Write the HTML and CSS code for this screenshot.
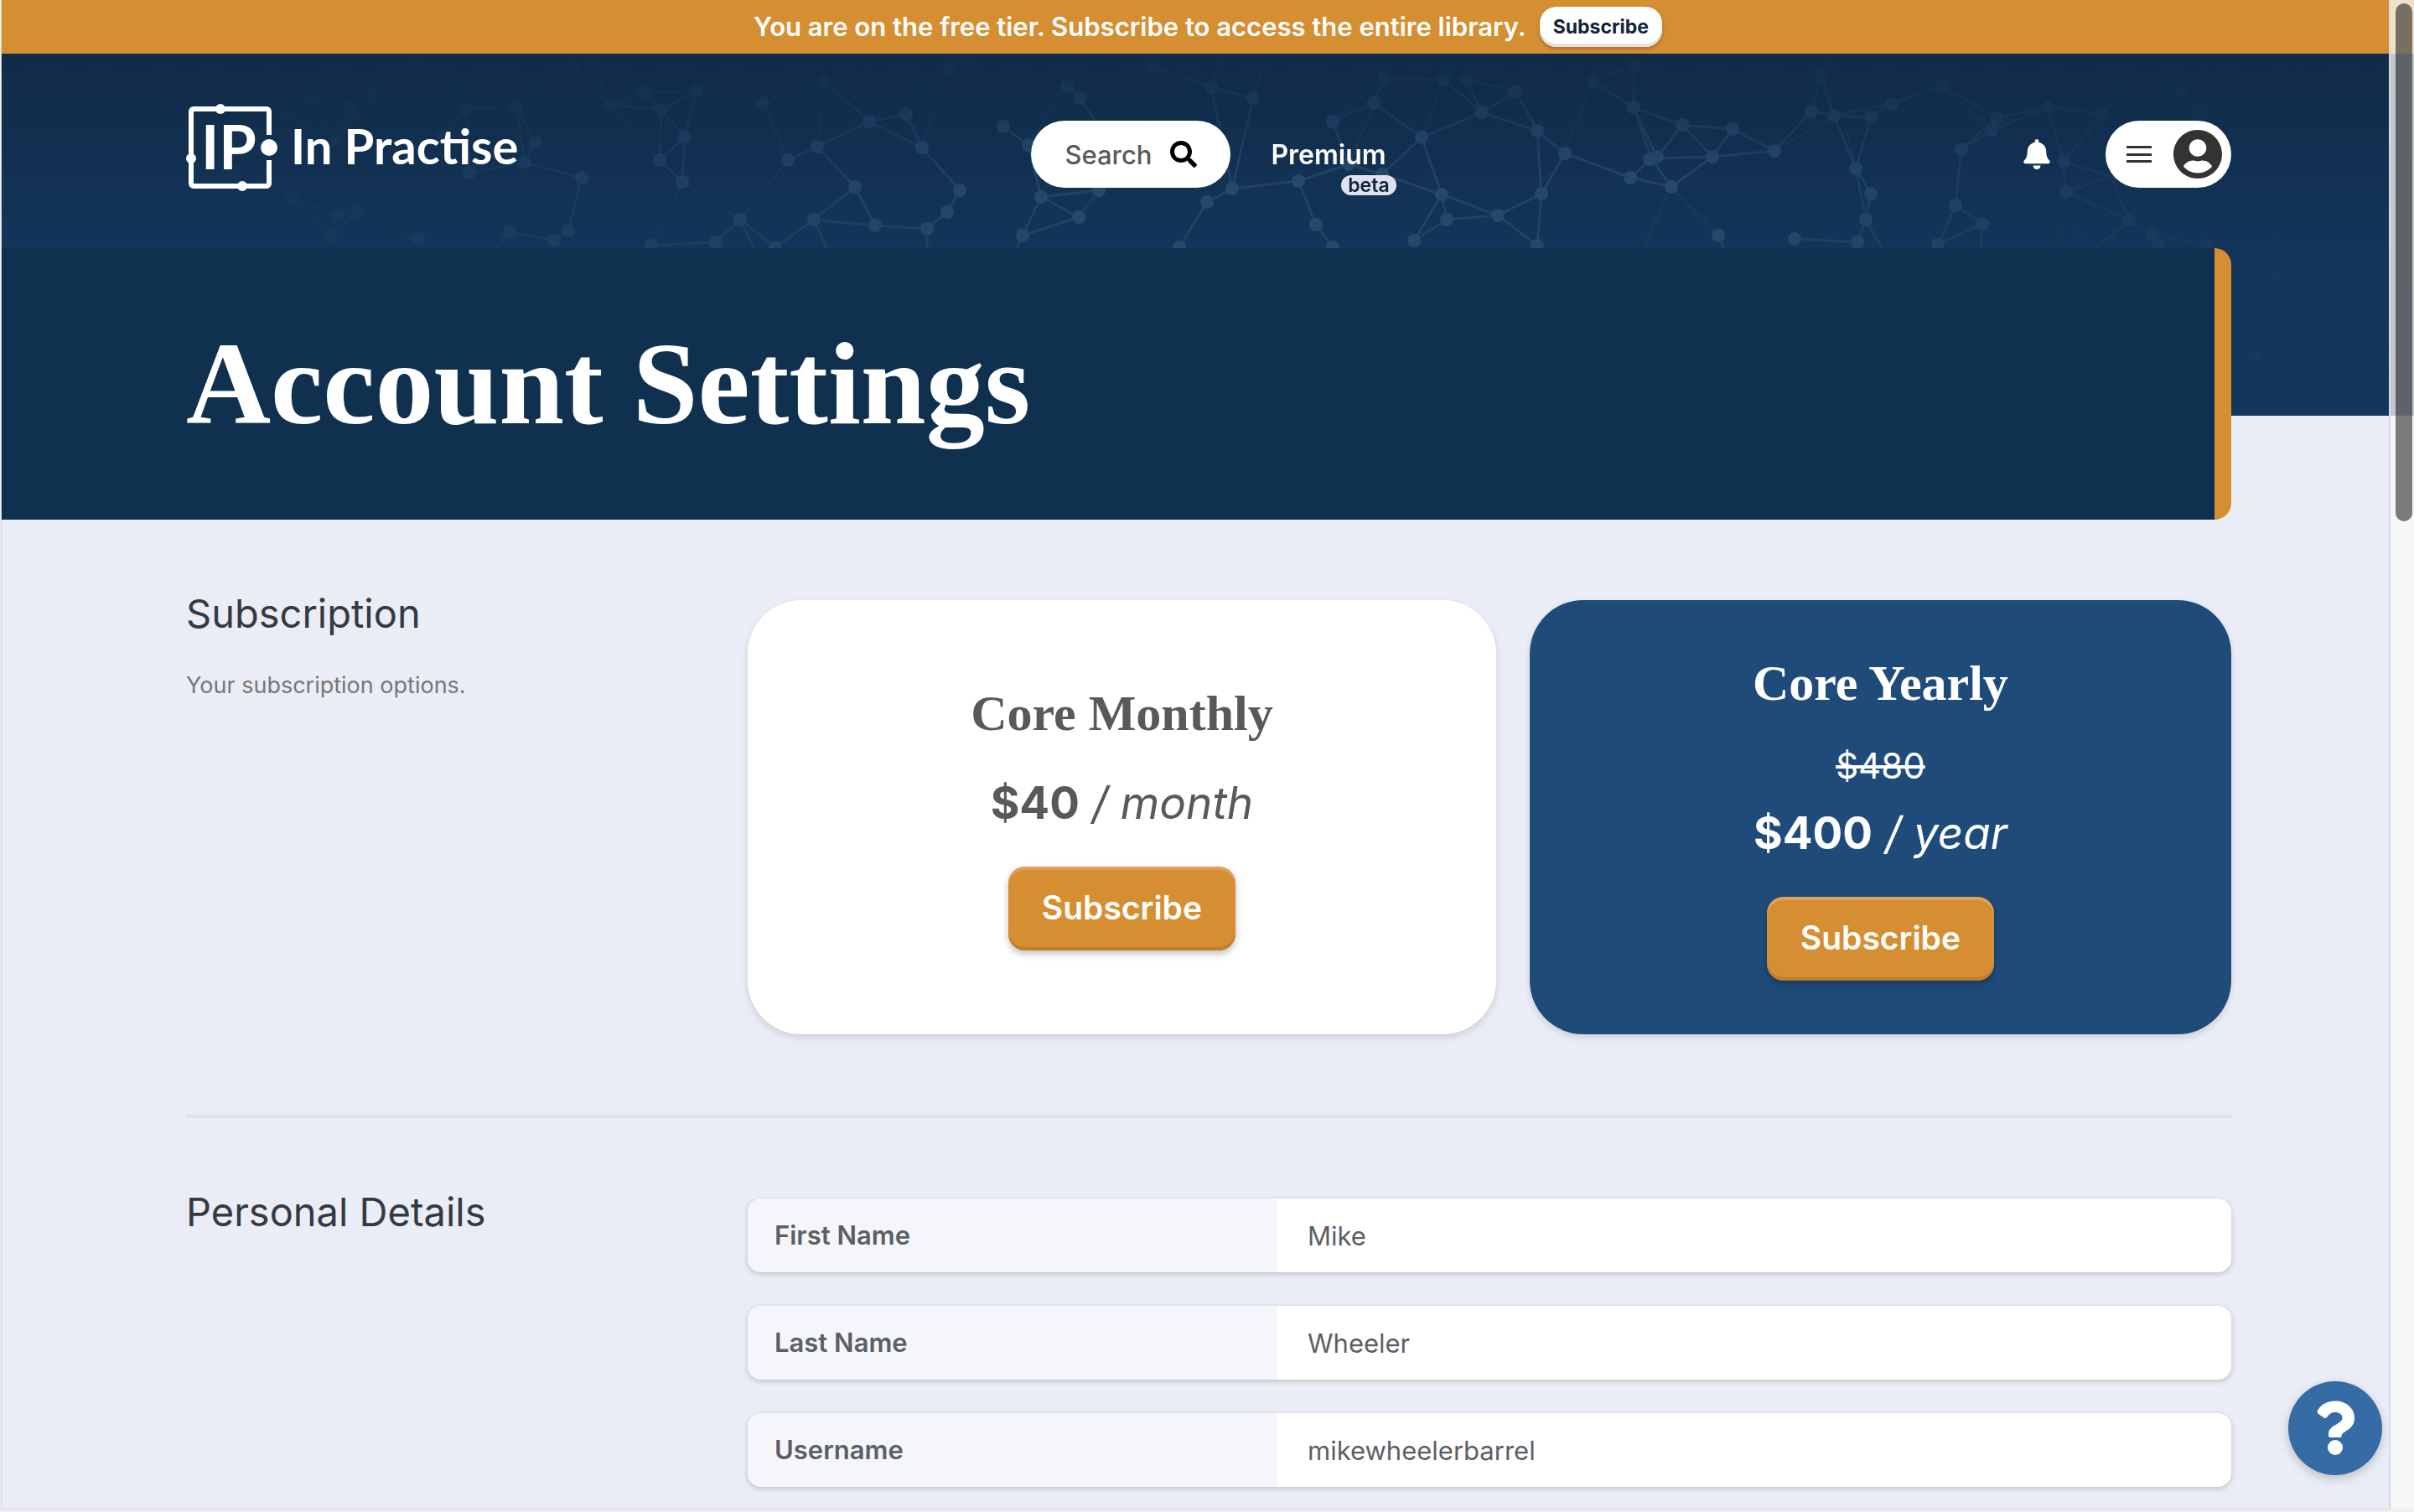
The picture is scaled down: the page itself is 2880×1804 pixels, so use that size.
FILE: index.html
```html
<!DOCTYPE html>
<html lang="en">
<head>
<meta charset="utf-8">
<meta name="viewport" content="width=device-width, initial-scale=1">
<title>Account Settings – In Practise</title>
<link rel="stylesheet" href="styles.css">
</head>
<body>
<div class="page">
  <aside class="banner">
    <p class="banner-text">You are on the free tier. Subscribe to access the entire library.</p>
    <button class="banner-button" type="button">Subscribe</button>
  </aside>

  <header class="masthead">
    <svg class="network" viewBox="0 64 2880 432" preserveAspectRatio="xMidYMin slice" aria-hidden="true">
      <defs>
        <linearGradient id="fade-x" x1="0" x2="1" y1="0" y2="0">
          <stop offset="0" stop-color="#000"/>
          <stop offset=".08" stop-color="#111"/>
          <stop offset=".22" stop-color="#777"/>
          <stop offset=".42" stop-color="#fff"/>
          <stop offset=".72" stop-color="#fff"/>
          <stop offset=".86" stop-color="#777"/>
          <stop offset=".93" stop-color="#222"/>
          <stop offset="1" stop-color="#000"/>
        </linearGradient>
        <linearGradient id="fade-y" x1="0" x2="0" y1="0" y2="1">
          <stop offset="0" stop-color="#112c48" stop-opacity="1"/>
          <stop offset=".6" stop-color="#112f50" stop-opacity="0"/>
        </linearGradient>
        <mask id="network-mask" maskUnits="userSpaceOnUse" x="0" y="64" width="2880" height="432">
          <rect x="0" y="64" width="2880" height="432" fill="url(#fade-x)"/>
        </mask>
        <g id="node"><circle r="8"/></g>
      </defs>
      <g mask="url(#network-mask)" fill="#25496b" stroke="none">
        <path fill="none" stroke="#204263" stroke-width="3" d="M341 137L370 117L415 128L442 115L400 168L415 128M370 117L400 168M341 137L400 168M555 130L615 127L637 169L625 194L559 206L555 130L521 85L495 72M555 130L575 64M615 127L625 194L693 212L677 275L660 287L607 277L590 296M347 236L402 257L426 252L393 282L402 257M347 236L393 282L400 296M727 125L767 111L830 108L788 131L767 111L705 76L727 125L788 131L816 163L786 191L788 131M830 108L816 163L813 217L786 191M683 81L727 125M776 293L852 289L882 262L924 295L970 262L1043 269L1105 273L1129 253L1144 227L1099 176L1080 136L1036 145L974 175L939 191L909 123M852 289L862 296M882 262L898 296M983 97L1036 145L1099 176M974 175L1019 223L970 262L985 296M1019 223L1043 269M1105 273V296M1196 151L1226 173L1241 235L1310 227L1286 259L1241 235L1219 281L1212 296M1219 281L1286 259M1272 103L1288 117L1310 152M1444 104L1494 117L1469 225L1439 241L1406 295M1444 104L1469 225M1373 81L1444 104L1460 64M1494 117L1510 64M1548 216L1608 196L1589 145L1638 123L1695 164L1648 208L1608 196M1548 216L1569 268L1589 295M1638 123L1651 93L1721 95L1767 134L1748 95L1807 109L1767 134L1833 156L1866 183L1838 231L1786 257L1725 262L1719 232L1648 208M1767 134L1695 164L1719 232L1786 257L1833 293L1838 231L1833 156L1807 109M1725 262L1686 287L1719 232M1469 225L1548 216M1899 97L1948 79L1948 128L1899 97M1948 128L2006 149L2066 154L2042 187L1969 189L1944 212L1993 223L2042 187L2116 180L2066 154M2006 149L1976 188L1948 128L1969 189L1993 223M2006 149L2042 187M1866 183L1944 212M2116 180L2160 133L2187 138L2231 140L2256 124L2317 103L2381 141L2376 155L2339 178L2332 245L2364 267L2311 292L2332 245M2160 133L2172 91L2187 138L2213 201L2231 140M2187 138L2256 124M2172 91L2180 64M2213 201L2231 231L2225 262L2215 289M2213 201L2225 262L2244 296M2140 285L2215 289M2049 281L2056 296M2364 267L2362 296M2339 178L2381 141L2442 128L2507 136L2461 193L2442 128L2376 155L2317 103M2461 193L2464 229L2517 210L2461 193M2517 210L2539 263L2567 279L2633 293L2713 292L2739 294L2713 333L2662 350M2464 229L2539 263L2500 296M2507 136L2540 87L2603 110L2624 134"/>
        <path fill="none" stroke="#1a3b5c" stroke-width="2" d="M442 115L485 64M370 117L390 64M415 128L410 64M521 85L555 130L528 162M269 93L282 126L341 137M269 93L195 105L134 103L141 137M280 204L347 236M426 252L498 285M559 206L607 277M625 194L607 277M615 127L690 80M830 108L909 123L983 97L960 64M909 123L939 191M813 217L882 262L939 191M813 217L776 293M786 191L727 125M983 97L974 175M1036 145L1132 81M1099 176L1132 81M1226 173L1272 103L1250 64M1286 259L1310 227L1320 180M1638 123L1589 145L1651 93M1695 164L1721 95M1608 196L1638 123M1748 95L1750 64M1721 95L1735 64M1899 97L1866 183M1992 223L2049 281M1992 223L1960 296M2116 180L2187 138M2213 201L2200 150M2317 103L2340 64M2317 103L2376 155M2464 229L2450 296M2464 229L2485 296M2539 263L2560 220M2567 279L2560 220M2633 293L2625 210M2624 134L2630 80"/>
        <g>
          <use href="#node" x="134" y="103"/><use href="#node" x="195" y="105"/><use href="#node" x="269" y="93"/><use href="#node" x="141" y="137"/><use href="#node" x="282" y="126"/><use href="#node" x="279" y="204"/><use href="#node" x="280" y="294"/><use href="#node" x="341" y="137"/><use href="#node" x="370" y="117"/><use href="#node" x="415" y="128"/><use href="#node" x="442" y="115"/><use href="#node" x="400" y="168"/><use href="#node" x="521" y="85"/><use href="#node" x="495" y="72"/><use href="#node" x="555" y="130"/><use href="#node" x="615" y="127"/><use href="#node" x="637" y="169"/><use href="#node" x="625" y="194"/><use href="#node" x="559" y="206"/><use href="#node" x="528" y="162"/><use href="#node" x="693" y="212"/><use href="#node" x="677" y="275"/><use href="#node" x="660" y="287"/><use href="#node" x="607" y="277"/><use href="#node" x="347" y="236"/><use href="#node" x="402" y="257"/><use href="#node" x="426" y="252"/><use href="#node" x="393" y="282"/><use href="#node" x="498" y="285"/>
          <use href="#node" x="683" y="81"/><use href="#node" x="705" y="76"/><use href="#node" x="727" y="125"/><use href="#node" x="767" y="111"/><use href="#node" x="830" y="108"/><use href="#node" x="788" y="131"/><use href="#node" x="816" y="163"/><use href="#node" x="786" y="191"/><use href="#node" x="813" y="217"/><use href="#node" x="909" y="123"/><use href="#node" x="939" y="191"/><use href="#node" x="882" y="262"/><use href="#node" x="776" y="293"/><use href="#node" x="852" y="289"/><use href="#node" x="924" y="296"/>
          <use href="#node" x="983" y="97"/><use href="#node" x="1036" y="145"/><use href="#node" x="1080" y="136"/><use href="#node" x="974" y="175"/><use href="#node" x="1099" y="176"/><use href="#node" x="1019" y="223"/><use href="#node" x="1144" y="227"/><use href="#node" x="1129" y="253"/><use href="#node" x="970" y="262"/><use href="#node" x="1043" y="269"/><use href="#node" x="1105" y="273"/><use href="#node" x="1132" y="81"/><use href="#node" x="1149" y="76"/><use href="#node" x="1196" y="151"/><use href="#node" x="1226" y="173"/><use href="#node" x="1272" y="103"/><use href="#node" x="1288" y="117"/><use href="#node" x="1241" y="235"/><use href="#node" x="1310" y="227"/><use href="#node" x="1286" y="259"/><use href="#node" x="1219" y="281"/><use href="#node" x="1373" y="81"/><use href="#node" x="1444" y="104"/><use href="#node" x="1494" y="117"/><use href="#node" x="1469" y="225"/><use href="#node" x="1439" y="241"/><use href="#node" x="1406" y="295"/>
          <use href="#node" x="1548" y="216"/><use href="#node" x="1608" y="196"/><use href="#node" x="1589" y="145"/><use href="#node" x="1638" y="123"/><use href="#node" x="1651" y="93"/><use href="#node" x="1721" y="95"/><use href="#node" x="1748" y="95"/><use href="#node" x="1807" y="109"/><use href="#node" x="1767" y="134"/><use href="#node" x="1695" y="164"/><use href="#node" x="1833" y="156"/><use href="#node" x="1866" y="183"/><use href="#node" x="1719" y="232"/><use href="#node" x="1838" y="231"/><use href="#node" x="1786" y="257"/><use href="#node" x="1725" y="262"/><use href="#node" x="1686" y="287"/><use href="#node" x="1833" y="293"/><use href="#node" x="1569" y="268"/><use href="#node" x="1589" y="295"/><use href="#node" x="1648" y="208"/><use href="#node" x="1899" y="97"/><use href="#node" x="1948" y="79"/><use href="#node" x="1948" y="128"/><use href="#node" x="1944" y="212"/><use href="#node" x="1967" y="190"/><use href="#node" x="1976" y="187"/><use href="#node" x="1993" y="223"/>
          <use href="#node" x="2006" y="149"/><use href="#node" x="2066" y="154"/><use href="#node" x="2042" y="187"/><use href="#node" x="2116" y="180"/><use href="#node" x="2160" y="133"/><use href="#node" x="2187" y="138"/><use href="#node" x="2231" y="140"/><use href="#node" x="2256" y="124"/><use href="#node" x="2172" y="91"/><use href="#node" x="2213" y="201"/><use href="#node" x="2231" y="231"/><use href="#node" x="2225" y="262"/><use href="#node" x="2215" y="289"/><use href="#node" x="2140" y="285"/><use href="#node" x="2049" y="281"/><use href="#node" x="2317" y="103"/><use href="#node" x="2381" y="141"/><use href="#node" x="2376" y="155"/><use href="#node" x="2339" y="178"/><use href="#node" x="2332" y="245"/><use href="#node" x="2364" y="267"/><use href="#node" x="2311" y="292"/><use href="#node" x="2442" y="128"/><use href="#node" x="2507" y="136"/><use href="#node" x="2461" y="193"/><use href="#node" x="2464" y="229"/><use href="#node" x="2539" y="263"/><use href="#node" x="2567" y="279"/><use href="#node" x="2574" y="293"/><use href="#node" x="2633" y="293"/><use href="#node" x="2624" y="134"/><use href="#node" x="2603" y="110"/><use href="#node" x="2540" y="87"/><use href="#node" x="2713" y="292"/><use href="#node" x="2739" y="294"/><use href="#node" x="2713" y="333"/><use href="#node" x="2689" y="423"/><use href="#node" x="2730" y="124"/>
        </g>
      </g>
      <rect x="0" y="64" width="2880" height="232" fill="url(#fade-y)"/>
    </svg>

    <nav class="nav" aria-label="Main">
      <a class="logo" href="#" aria-label="In Practise">
        <svg width="404" height="124" viewBox="0 0 404 124" aria-hidden="true">
          <g fill="none" stroke="#fff" stroke-width="6">
            <path d="M99 39V11a3 3 0 0 0-3-3H9a3 3 0 0 0-3 3v86a3 3 0 0 0 3 3h87a3 3 0 0 0 3-3V69"/>
          </g>
          <g fill="#fff">
            <circle cx="41" cy="8" r="6"/>
            <circle cx="6" cy="67" r="6"/>
            <circle cx="67" cy="100" r="6"/>
            <circle cx="99" cy="54" r="10"/>
          </g>
          <text class="logo-mark" x="18" y="80">IP</text>
          <text class="logo-name" x="125" y="74">In Practise</text>
        </svg>
      </a>
      <div class="nav-center">
        <button class="search" type="button">
          Search
          <svg width="32" height="32" viewBox="0 0 512 512" aria-hidden="true"><path d="M505 442.700L405.300 343c-4.500-4.500-10.600-7-17-7H372c27.600-35.300 44-79.700 44-128C416 93.100 322.900 0 208 0S0 93.100 0 208s93.100 208 208 208c48.300 0 92.700-16.400 128-44v16.300c0 6.400 2.500 12.500 7 17l99.700 99.700c9.400 9.400 24.600 9.400 33.900 0l28.300-28.300c9.400-9.400 9.400-24.600.1-34zM208 336c-70.700 0-128-57.200-128-128 0-70.700 57.200-128 128-128 70.700 0 128 57.200 128 128 0 70.700-57.200 128-128 128z"/></svg>
        </button>
        <a class="premium" href="#">Premium<span class="beta">beta</span></a>
      </div>
      <div class="nav-end">
        <button class="bell" type="button" aria-label="Notifications">
          <svg width="32" height="36" viewBox="0 0 448 512" fill="#fff" aria-hidden="true"><path d="M224 512c35.320 0 63.970-28.650 63.970-64H160.030c0 35.350 28.650 64 63.970 64zm215.390-149.710c-19.320-20.760-55.470-51.990-55.470-154.290 0-77.700-54.480-139.900-127.940-155.160V32c0-17.670-14.320-32-31.980-32s-31.980 14.330-31.980 32v20.840C118.560 68.100 64.080 130.300 64.080 208c0 102.300-36.150 133.530-55.470 154.290-6 6.450-8.660 14.160-8.610 21.710.11 16.400 12.980 32 32.100 32h383.800c19.120 0 32-15.600 32.100-32 .05-7.550-2.610-15.270-8.610-21.710z"/></svg>
        </button>
        <button class="account" type="button" aria-label="Account menu">
          <svg width="32" height="24" viewBox="0 0 32 24" fill="#333" aria-hidden="true"><path d="M1 2h30v3H1zM1 11h30v3H1zM1 19h30v3H1z"/></svg>
          <svg width="58" height="58" viewBox="0 0 496 496" fill="#333" aria-hidden="true"><path d="M248 0C111 0 0 111 0 248s111 248 248 248 248-111 248-248S385 0 248 0zm0 96c48.600 0 88 39.400 88 88s-39.400 88-88 88-88-39.400-88-88 39.400-88 88-88zm0 344c-58.700 0-111.300-26.600-146.500-68.200 18.800-35.400 55.600-59.800 98.500-59.800 2.400 0 4.800.4 7.100 1.100 13 4.200 26.600 6.900 40.900 6.900 14.300 0 28-2.700 40.900-6.900 2.300-.7 4.700-1.100 7.100-1.100 42.900 0 79.700 24.400 98.500 59.800C359.300 413.400 306.700 440 248 440z"/></svg>
        </button>
      </div>
    </nav>

    <div class="title-bar">
      <h1 class="title">Account Settings</h1>
    </div>
  </header>

  <main class="content">
    <section class="section">
      <div class="section-intro">
        <h2 class="section-title">Subscription</h2>
        <p class="section-text">Your subscription options.</p>
      </div>
      <div class="plans">
        <article class="plan">
          <h3 class="plan-name">Core Monthly</h3>
          <p class="price"><strong>$40</strong> <em>/ month</em></p>
          <button class="subscribe" type="button">Subscribe</button>
        </article>
        <article class="plan plan-featured">
          <h3 class="plan-name">Core Yearly</h3>
          <p class="old-price"><s>$480</s></p>
          <p class="price"><strong>$400</strong> <em>/ year</em></p>
          <button class="subscribe" type="button">Subscribe</button>
        </article>
      </div>
    </section>

    <hr class="divider">

    <section class="section">
      <div class="section-intro">
        <h2 class="section-title">Personal Details</h2>
      </div>
      <form class="fields">
        <div class="field">
          <label class="field-label" for="first-name">First Name</label>
          <input class="field-input" id="first-name" type="text" value="Mike">
        </div>
        <div class="field">
          <label class="field-label" for="last-name">Last Name</label>
          <input class="field-input" id="last-name" type="text" value="Wheeler">
        </div>
        <div class="field">
          <label class="field-label" for="username">Username</label>
          <input class="field-input" id="username" type="text" value="mikewheelerbarrel">
        </div>
      </form>
    </section>
  </main>
</div>

<button class="help" type="button" aria-label="Help">
  <svg width="46" height="66" viewBox="0 0 46 66" fill="#fff" aria-hidden="true"><path d="M2.500 11C7 4 14 .5 23.500 .5 35 .5 46 8.500 46 20.500c0 15.500-15.500 15.500-15.500 22 0 1-.8 1.500-1.800 1.500H17c-1.200 0-2-.8-2-2v-2C15 29 31.500 28.500 31.500 20.500c0-4-4-6.500-9-6.500-4.500 0-6.500 2.500-9.500 6-1 1.200-2.500 1.300-3.700.4L3 16c-1.500-1.200-1.700-3.200-.5-5z"/><circle cx="23" cy="56" r="9"/></svg>
</button>

<div class="scroll-track" aria-hidden="true"><div class="scroll-thumb"></div></div>
</body>
</html>
```
FILE: styles.css
```css
*, *::before, *::after { box-sizing: border-box; }

body {
  margin: 0;
  min-height: 100vh;
  padding: 0 0 3px 1px;
  display: flex;
  flex-direction: column;
  background: #f0f0f1;
  color: #595959;
  font-family: Inter, "Liberation Sans", sans-serif;
}

h1, h2, h3, p { margin: 0; font-weight: 400; }

button {
  border: 0;
  padding: 0;
  font-family: inherit;
  cursor: pointer;
}

svg { display: block; }

.page {
  flex: 1;
  background: #eaedf5;
  border-left: 1px solid #d4d5da;
  border-bottom: 1px solid #d4d5da;
}

/* Free tier banner */
.banner {
  display: flex;
  align-items: center;
  justify-content: center;
  gap: 16px;
  height: 64px;
  background: #d58f32;
}

.banner-text {
  color: #fff;
  font-size: 31px;
  font-weight: 600;
  line-height: 40px;
}

.banner-button {
  height: 48px;
  padding: 0 16px;
  border-radius: 20px;
  background: #fff;
  box-shadow: inset 0 -4px 0 #e3e3e3, 0 2px 4px rgba(0, 0, 0, .25);
  color: #11253a;
  font-size: 23px;
  font-weight: 700;
}

/* Masthead */
.masthead {
  position: relative;
  background: linear-gradient(#112c48, #13355a 56%, #13365e) no-repeat 0 0 / 100% 432px;
}

.network {
  position: absolute;
  top: 0;
  left: 0;
  width: 100%;
  height: 432px;
}

.nav {
  position: relative;
  display: grid;
  grid-template-columns: 1fr auto 1fr;
  align-items: center;
  height: 232px;
  padding: 8px 218px 0 220px;
}

.logo { justify-self: start; }

.logo-mark {
  fill: #fff;
  font-family: Lato, sans-serif;
  font-size: 72px;
  font-weight: 700;
}

.logo-name {
  fill: #fff;
  font-family: Lato, sans-serif;
  font-size: 58px;
  font-weight: 700;
}

.nav-center {
  display: flex;
  align-items: center;
  gap: 48px;
}

.search {
  display: flex;
  align-items: center;
  gap: 22px;
  height: 80px;
  padding: 0 40px;
  border-radius: 40px;
  background: #fff;
  color: #595959;
  font-size: 31px;
  font-weight: 500;
}

.premium {
  position: relative;
  color: #fff;
  font-size: 32px;
  font-weight: 600;
  text-decoration: none;
}

.beta {
  position: absolute;
  top: 44px;
  right: -12px;
  padding: 0 8px;
  border-radius: 12px;
  background: #dfe2ee;
  color: #11253a;
  font-size: 23px;
  line-height: 24px;
}

.nav-end {
  display: flex;
  align-items: center;
  justify-content: flex-end;
  gap: 66px;
}

.bell { background: none; }

.account {
  display: flex;
  align-items: center;
  gap: 25px;
  height: 80px;
  padding: 0 11px 0 24px;
  border-radius: 40px;
  background: #fff;
}

.title-bar {
  position: relative;
  display: flex;
  align-items: center;
  height: 324px;
  margin-right: 218px;
  padding-left: 220px;
  border-right: 20px solid #d58f32;
  border-radius: 0 20px 20px 0;
  background: #10304f;
}

.title {
  color: #fff;
  font-family: "Liberation Serif", serif;
  font-size: 140px;
  font-weight: 700;
  line-height: 160px;
}

/* Sections */
.content { padding: 0 218px 26px 220px; }

.section {
  display: grid;
  grid-template-columns: 670px 1fr;
  padding-top: 96px;
}

.section-title {
  color: #343a44;
  font-size: 47px;
  line-height: 32px;
}

.section-text {
  margin-top: 50px;
  color: #777;
  font-size: 27px;
  line-height: 40px;
}

.divider {
  height: 4px;
  margin: 96px 0 0;
  border: 0;
  background: #dfe2eb;
}

/* Plans */
.plans {
  display: flex;
  gap: 40px;
}

.plan {
  flex: 1 1 auto;
  display: flex;
  flex-direction: column;
  align-items: center;
  justify-content: center;
  padding: 64px;
  border-radius: 64px;
  background: #fff;
  box-shadow: 0 4px 8px rgba(0, 0, 0, .12);
}

.plan-featured {
  background: #1f4b7b;
  color: #fff;
}

.plan-name {
  margin-bottom: 40px;
  font-family: "Liberation Serif", serif;
  font-size: 60px;
  font-weight: 700;
  line-height: 70px;
}

.old-price {
  margin-bottom: 24px;
  font-size: 42px;
  line-height: 48px;
}

.price {
  margin-bottom: 44px;
  font-size: 53px;
  line-height: 64px;
}

.subscribe {
  height: 100px;
  padding: 0 40px 4px;
  border-radius: 20px;
  background: #d58f32;
  box-shadow: inset 0 4px 0 #dea35b, inset 0 -4px 0 #c07f2c, 0 4px 8px rgba(0, 0, 0, .25);
  color: #fff;
  font-size: 39px;
  font-weight: 600;
}

/* Form */
.fields {
  display: grid;
  gap: 40px;
}

.field {
  display: grid;
  grid-template-columns: 632px 1fr;
  height: 88px;
  overflow: hidden;
  border-radius: 16px;
  background: #fff;
  box-shadow: 0 2px 6px rgba(0, 0, 0, .2);
}

.field-label {
  padding: 0 32px;
  background: #f4f6fa;
  color: #5c5f66;
  font-size: 31px;
  font-weight: 600;
  line-height: 88px;
}

.field-input {
  min-width: 0;
  padding: 0 36px;
  border: 0;
  background: none;
  color: #5c5f66;
  font-family: inherit;
  font-size: 31px;
}

/* Floating controls */
.help {
  position: fixed;
  right: 38px;
  bottom: 44px;
  display: grid;
  place-items: center;
  width: 112px;
  height: 112px;
  border-radius: 50%;
  background: #356ca6;
  box-shadow: 0 4px 12px rgba(0, 0, 0, .2);
}

.scroll-track {
  position: fixed;
  top: 0;
  right: 0;
  bottom: 3px;
  width: 30px;
  padding: 4px 2px 0 6px;
  border-left: 2px solid #d9dade;
  background: rgba(250, 250, 250, .75);
}

.scroll-thumb {
  width: 20px;
  height: 618px;
  border-radius: 10px;
  background: rgba(0, 0, 0, .5);
}
```
